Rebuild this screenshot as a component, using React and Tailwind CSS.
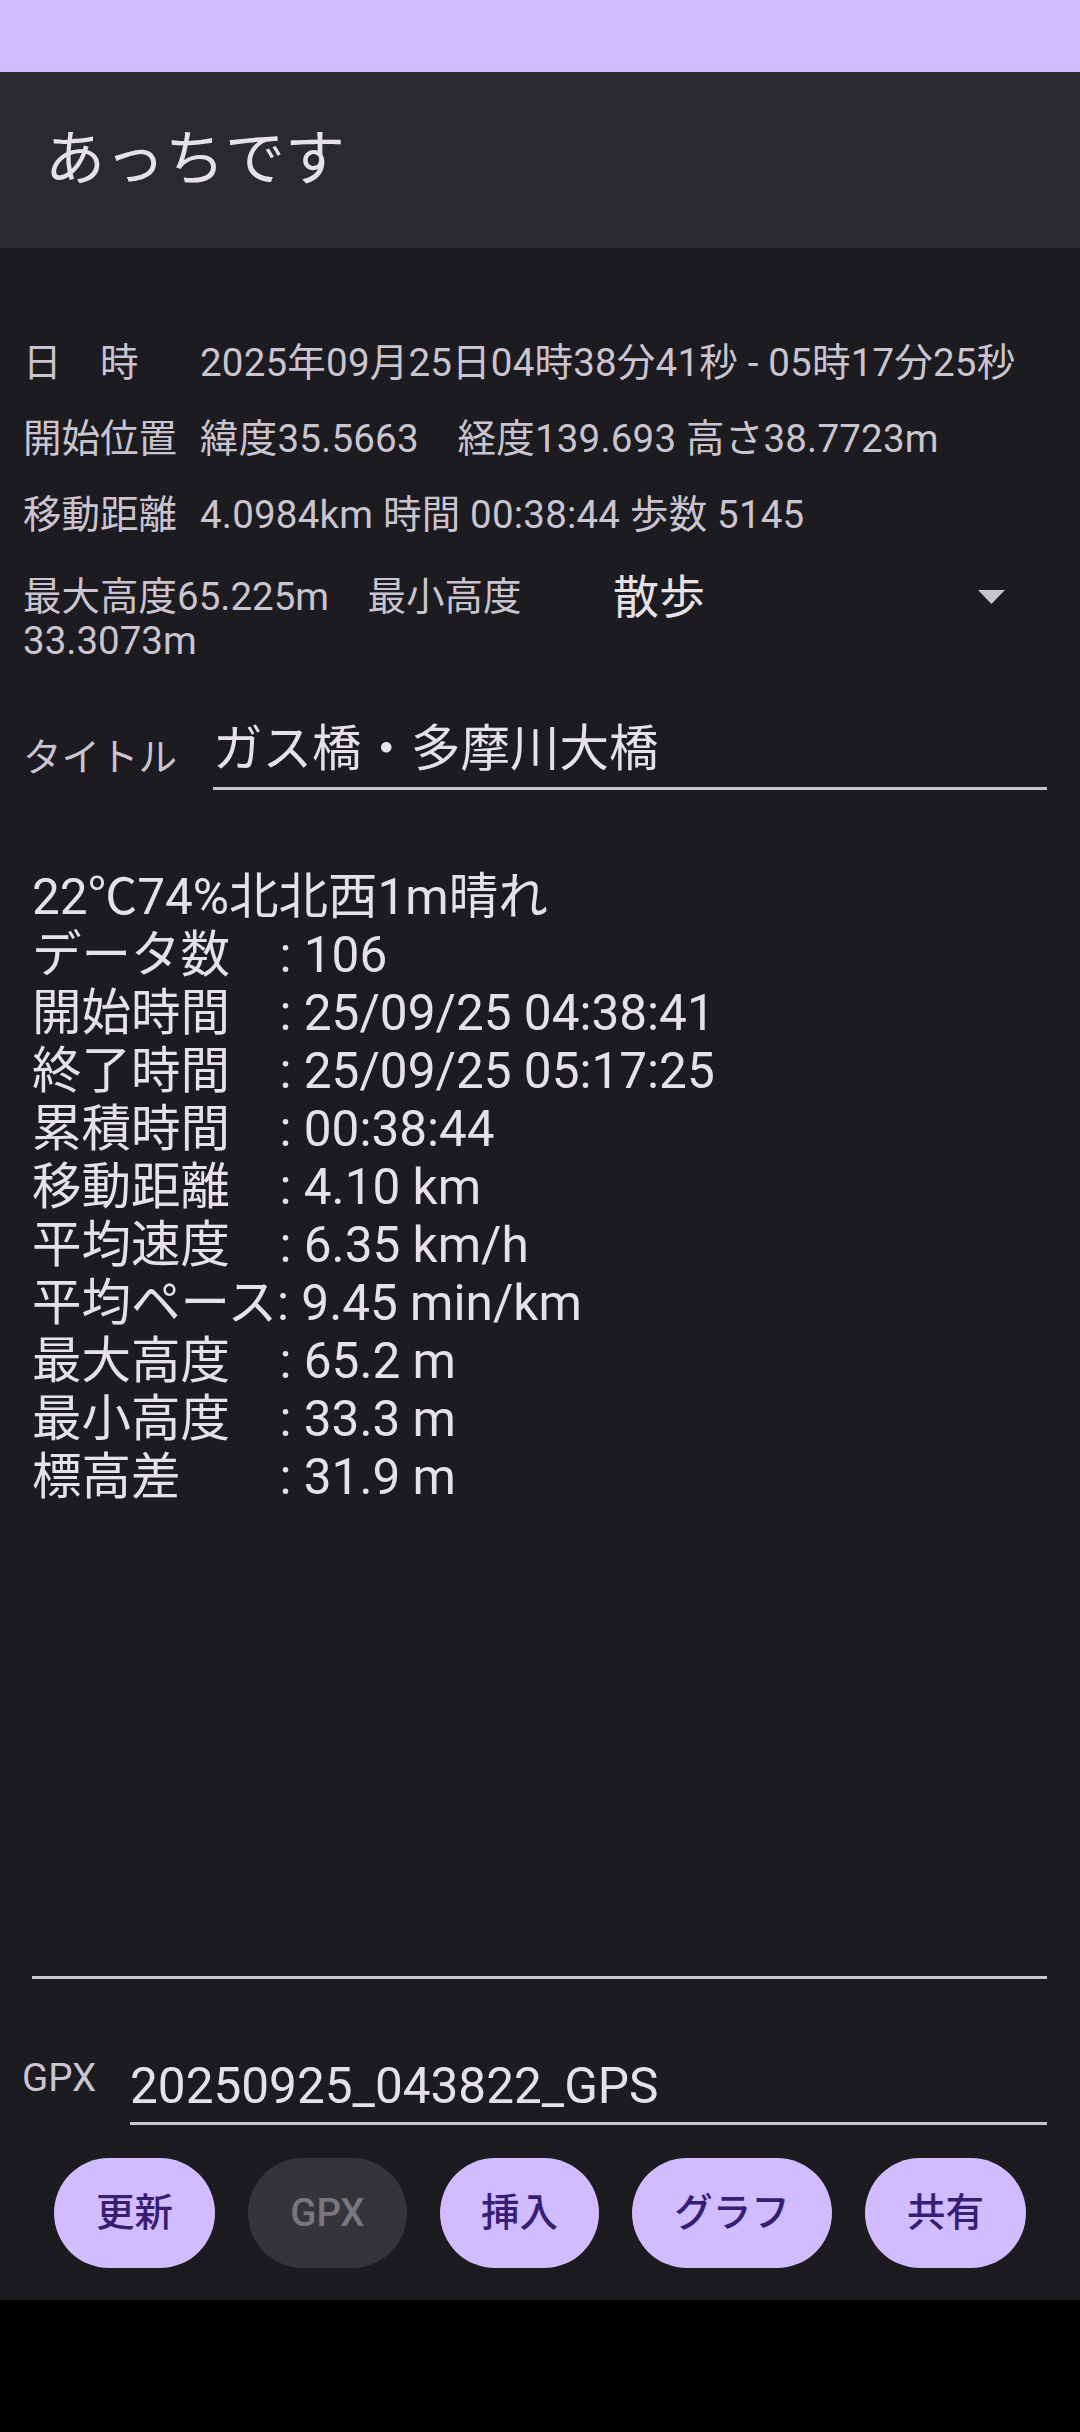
import React from 'react';

const FONT = "font-['Roboto','Noto_Sans_CJK_JP',sans-serif]";

const infoRows = [
  { label: '日　時', value: '2025年09月25日04時38分41秒 - 05時17分25秒' },
  { label: '開始位置', value: '緯度35.5663　経度139.693 高さ38.7723m' },
  { label: '移動距離', value: '4.0984km 時間 00:38:44 歩数 5145' },
];

const stats = [
  ['データ数', '106'],
  ['開始時間', '25/09/25 04:38:41'],
  ['終了時間', '25/09/25 05:17:25'],
  ['累積時間', '00:38:44'],
  ['移動距離', '4.10 km'],
  ['平均速度', '6.35 km/h'],
  ['平均ペース', '9.45 min/km'],
  ['最大高度', '65.2 m'],
  ['最小高度', '33.3 m'],
  ['標高差', '31.9 m'],
];

const pad = (s) => s + '　'.repeat(Math.max(0, 5 - s.length));

const buttons = [
  { label: '更新', w: 'w-[161px]', enabled: true },
  { label: 'GPX', w: 'w-[159px]', enabled: false },
  { label: '挿入', w: 'w-[159px]', enabled: true },
  { label: 'グラフ', w: 'w-[200px]', enabled: true },
  { label: '共有', w: 'w-[161px]', enabled: true },
];

export default function App() {
  return (
    <div className={`w-[1080px] h-[2432px] bg-black ${FONT}`}>
      <div className="h-[2300px] bg-[#1c1b1f] flex flex-col overflow-hidden">
        {/* status bar */}
        <div className="h-[72px] bg-[#d0bcff]" />

        {/* toolbar */}
        <header className="h-[176px] bg-[#2b2930] flex items-center pl-[45px]">
          <h1 className="text-[60px] leading-[70px] text-[#e6e1e5]">あっちです</h1>
        </header>

        {/* info rows */}
        <section className="pt-[77px] pl-[23px] text-[#cac4d0] text-[38.5px]">
          {infoRows.map((r) => (
            <div key={r.label} className="flex h-[76px] leading-[76px] whitespace-nowrap">
              <span className="w-[177px] shrink-0">{r.label}</span>
              <span className="tracking-[0.2px]">{r.value}</span>
            </div>
          ))}

          <div className="flex items-start mt-[22px]">
            <div className="w-[567px] shrink-0 leading-[44px]">
              <div>最大高度65.225m　最小高度</div>
              <div>33.3073m</div>
            </div>
            <div className="flex-1 flex items-center justify-between h-[44px] pl-[23px] pr-[75px]">
              <span className="text-[46px] leading-[44px] text-[#e6e1e5]">散歩</span>
              <svg width="27" height="14" viewBox="0 0 27 14">
                <path d="M0 0 H27 L13.5 14 Z" fill="#cac4d0" />
              </svg>
            </div>
          </div>

          {/* title row */}
          <div className="flex items-end mt-[57px] mr-[33px]">
            <span className="w-[190px] shrink-0 leading-[44px] mb-[10px]">タイトル</span>
            <div className="flex-1 pb-[9px] border-b-[3px] border-[#cac4d0]">
              <div className="text-[49.5px] leading-[58px] text-[#e6e1e5]">ガス橋・多摩川大橋</div>
            </div>
          </div>
        </section>

        {/* stats memo */}
        <div className="mt-[78px] ml-[32px] mr-[33px] h-[1111px] border-b-[3px] border-[#cac4d0] text-[49.5px] leading-[58px] text-[#e6e1e5] whitespace-nowrap">
          <div className="h-[58px]">
            22<span className="font-['Noto_Sans_CJK_JP',sans-serif] leading-[0px]">℃</span>74%北北西1m晴れ
          </div>
          {stats.map(([k, v]) => (
            <div key={k} className="h-[58px]">{pad(k)}: {v}</div>
          ))}
        </div>

        {/* gpx row */}
        <div className="flex items-end mt-[77px] pl-[22px] mr-[33px]">
          <span className="w-[108px] shrink-0 text-[38.5px] leading-[44px] mb-[25px] text-[#cac4d0]">GPX</span>
          <div className="flex-1 pb-[7px] border-b-[3px] border-[#cac4d0]">
            <div className="text-[49.5px] leading-[58px] text-[#e6e1e5]">20250925_043822_GPS</div>
          </div>
        </div>

        {/* buttons */}
        <div className="flex justify-center gap-[33px] mt-[33px]">
          {buttons.map((b) => (
            <button
              key={b.label}
              className={`${b.w} h-[110px] rounded-full text-[38.5px] font-medium flex items-center justify-center ${
                b.enabled ? 'bg-[#d0bcff] text-[#381e72]' : 'bg-[#36343b] text-[#79767d]'
              }`}
            >
              {b.label}
            </button>
          ))}
        </div>
      </div>
    </div>
  );
}
